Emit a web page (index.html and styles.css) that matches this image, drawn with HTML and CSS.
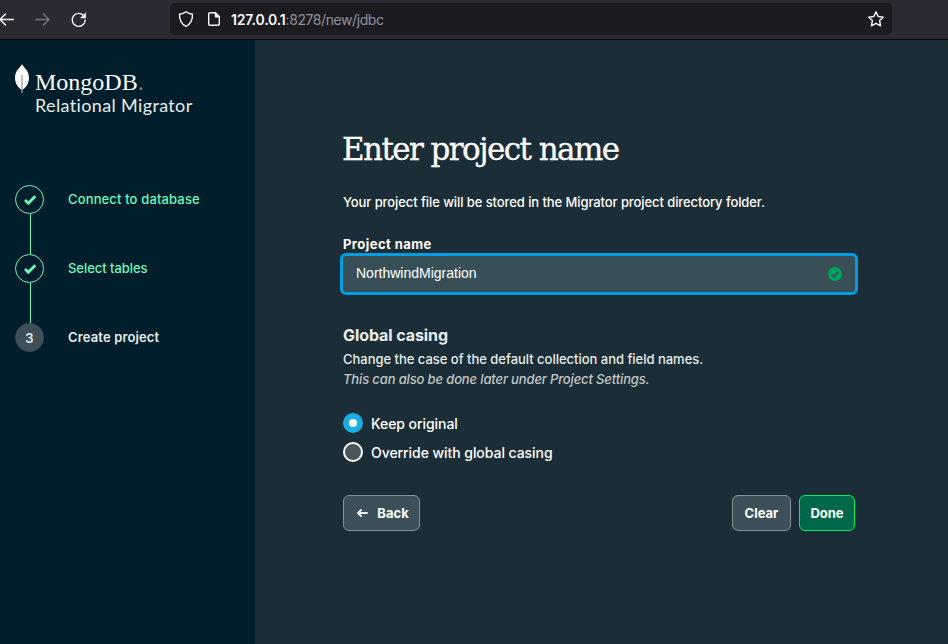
FILE: index.html
```html
<!DOCTYPE html>
<html lang="en">
<head>
<meta charset="utf-8">
<title>Relational Migrator</title>
<link rel="stylesheet" href="styles.css">
</head>
<body>
<header class="toolbar">
  <nav class="nav">
    <svg width="18" height="18" viewBox="0 0 18 18"><path d="M16.500 9.500H2.500M8.500 4L3 9.500l5.500 5.500"/></svg>
    <svg class="dim" width="18" height="18" viewBox="0 0 18 18"><path d="M3 9.500h13M10.500 4l5.500 5.500-5.500 5.500"/></svg>
    <svg width="18" height="18" viewBox="0 0 18 18"><path d="M14.500 5.500A6.500 6.500 0 1 0 16.200 10"/><path class="solid" d="M16.700 3v5h-5z"/></svg>
  </nav>
  <div class="address">
    <svg width="16" height="18" viewBox="0 0 16 18"><path d="M8 1.700C6 3.300 3.700 4 1.500 4.300C1.300 9.500 3.200 14 8 16.400C12.800 14 14.700 9.500 14.500 4.300C12.300 4 10 3.300 8 1.700z"/></svg>
    <svg class="page-icon" width="14" height="16" viewBox="0 0 14 16"><path d="M8.500 1.700H3a1.300 1.300 0 0 0-1.300 1.300v10A1.300 1.300 0 0 0 3 14.300h8a1.300 1.300 0 0 0 1.300-1.300V5.500z"/><path class="solid" d="M8 1.500v4.700h4.500z"/></svg>
    <span class="url"><b>127.0.0.1</b>:8278/new/jdbc</span>
    <svg class="star" width="18" height="18" viewBox="0 0 18 18"><path d="M9 1.800l2.200 4.700 5.100.6-3.700 3.500 1 5.200L9 13.300l-4.600 2.500 1-5.200L1.700 7.100l5.100-.6z"/></svg>
  </div>
</header>
<div class="app">
  <aside class="sidebar">
    <div class="brand">
      <svg class="leaf" width="14" height="30" viewBox="0 0 14 30"><path d="M7 0C8 3 14 6 14 14C14 20 10 24 8 25.500H6C4 24 0 20 0 14C0 6 6 3 7 0z" fill="#fff"/><path d="M7 11v18" stroke="#9aa5aa" stroke-width="1.300"/></svg>
      <div>
        <div class="wordmark">MongoDB<span>.</span></div>
        <div class="product">Relational Migrator</div>
      </div>
    </div>
    <ol class="steps">
      <li class="done"><i class="dot"><svg width="14" height="12" viewBox="0 0 14 12"><path d="M2 6l3.300 3.300L12.300 2.300"/></svg></i><span class="step-name">Connect to database</span></li>
      <li class="done"><i class="dot"><svg width="14" height="12" viewBox="0 0 14 12"><path d="M2 6l3.300 3.300L12.300 2.300"/></svg></i><span class="step-name snug">Select tables</span></li>
      <li class="current"><i class="dot">3</i><span class="step-name">Create project</span></li>
    </ol>
  </aside>
  <main class="content">
    <h1>Enter project name</h1>
    <p class="intro">Your project file will be stored in the Migrator project directory folder.</p>
    <div class="label">Project name</div>
    <div class="field"><span class="value">NorthwindMigration</span>
      <svg width="14" height="14" viewBox="0 0 14 14"><circle cx="7" cy="7" r="7" fill="#00a35c"/><path d="M3.800 7.400l2.200 2.300 4.300-5" fill="none" stroke="#394f58" stroke-width="1.900"/></svg>
    </div>
    <h2>Global casing</h2>
    <p class="desc">Change the case of the default collection and field names.</p>
    <p class="hint">This can also be done later under Project Settings.</p>
    <div class="radio first"><i class="on"></i><span>Keep original</span></div>
    <div class="radio"><i></i><span>Override with global casing</span></div>
    <div class="actions">
      <div class="btn back"><svg width="12" height="10" viewBox="0 0 12 10"><path d="M11 5H2M5 2L2 5l3 3"/></svg><span>Back</span></div>
      <div class="btn clear"><span>Clear</span></div>
      <div class="btn primary"><span>Done</span></div>
    </div>
  </main>
</div>
</body>
</html>
```
FILE: styles.css
```css
* { box-sizing: border-box; }
body { margin: 0; width: 948px; height: 644px; overflow: hidden; display: flex; flex-direction: column; font-family: Inter, "Liberation Sans", sans-serif; font-size: 13px; font-weight: 500; color: #fff; background: #1b2d36; }
h1, h2, p, ol { margin: 0; padding: 0; font-weight: inherit; list-style: none; white-space: nowrap; }
svg { flex: none; display: block; }
span { white-space: nowrap; }

.toolbar { height: 40px; flex: none; display: flex; padding-top: 3px; background: #2b2a33; border-bottom: 1px solid #0c0c0d; }
.toolbar svg { fill: none; stroke: #fbfbfe; stroke-width: 1.4; stroke-linejoin: round; stroke-linecap: round; }
.toolbar .solid { fill: #fbfbfe; stroke-width: .5; }
.toolbar .dim { stroke: #77767e; }
.nav { width: 170px; display: flex; align-items: flex-start; gap: 18px; padding-top: 7px; margin-left: -3px; }
.address { width: 722px; height: 32px; margin-left: 3px; display: flex; align-items: center; padding: 0 7px 0 8px; border-radius: 5px; background: #1c1b22; }
.page-icon { margin-left: 13px; }
.url { margin-left: 10px; flex: 1; font-size: 14px; font-weight: 400; letter-spacing: -.42px; color: #92919a; }
.url b { color: #fbfbfe; font-weight: 600; letter-spacing: -.15px; }

.app { flex: 1; display: flex; min-height: 0; }
.sidebar { width: 255px; background: #001e2b; padding: 24px 0 0 15px; }
.brand { display: flex; gap: 6px; height: 121px; }
.wordmark { font: 24px/36px "Liberation Serif", serif; height: 30px; color: #fff; }
.wordmark span { color: #7d8a90; }
.product { font: 18px/22px Lato, sans-serif; letter-spacing: .36px; color: #e8edeb; }
.steps li { display: flex; align-items: center; gap: 24px; height: 29px; margin-bottom: 40px; color: #71f6ba; position: relative; }
.step-name { margin-top: -2px; letter-spacing: .14px; }
.step-name.snug { letter-spacing: -.05px; }
.dot { width: 29px; height: 29px; flex: none; display: flex; align-items: center; justify-content: center; border: 1px solid #71f6ba; border-radius: 50%; font-style: normal; font-weight: 600; }
.dot path { fill: none; stroke: #71f6ba; stroke-width: 2.8; }
.steps .done::after { content: ""; position: absolute; left: 15px; top: 29px; width: 1px; height: 40px; background: #71f6ba; }
.steps .current { color: #e8edeb; font-weight: 600; }
.current .dot { background: #3d4f58; border-color: #3d4f58; }

.content { flex: 1; padding: 88px 93px 0 88px; }
h1 { font: 31px/42px "DejaVu Serif", serif; letter-spacing: -1.6px; height: 42px; margin-left: -1px; -webkit-text-stroke: .3px #fff; }
.intro { line-height: 20px; margin-top: 22px; letter-spacing: -.085px; }
.label { line-height: 20px; margin-top: 22px; font-weight: 700; letter-spacing: .45px; }
.field { height: 42px; margin: -1px -3px 0; padding: 0 13px; display: flex; align-items: center; justify-content: space-between; border: 3px solid #019ee2; border-radius: 6px; background: #394f58; }
.value { font: 14px/20px "Liberation Sans", sans-serif; margin-top: -2px; }
h2 { font-size: 16px; line-height: 24px; font-weight: 700; margin-top: 28px; letter-spacing: -.08px; color: #e8edeb; }
.desc { line-height: 20px; margin-top: 2px; letter-spacing: -.02px; color: #e8edeb; }
.hint { line-height: 20px; font-style: italic; color: #c1c7c6; letter-spacing: -.14px; }
.radio { display: flex; align-items: center; gap: 8px; height: 20px; margin-top: 9px; font-size: 14px; letter-spacing: -.06px; }
.radio.first { margin-top: 24px; }
.radio i { width: 20px; height: 20px; flex: none; border: 2px solid #fff; border-radius: 50%; background: #49565e; }
.radio .on { background: #fff; border: 6px solid #1daee1; }
.actions { display: flex; gap: 8px; width: 512px; margin-top: 33px; }
.btn { height: 36px; display: flex; align-items: center; justify-content: center; border: 1px solid #889397; border-radius: 6px; background: #3d4f58; font-weight: 700; }
.back { width: 77px; gap: 9px; margin-right: auto; padding-left: 2px; }
.back path { fill: none; stroke: #fff; stroke-width: 1.8; stroke-linecap: round; }
.clear { width: 59px; }
.primary { width: 56px; background: #00684a; border-color: #00ed64; }
```
